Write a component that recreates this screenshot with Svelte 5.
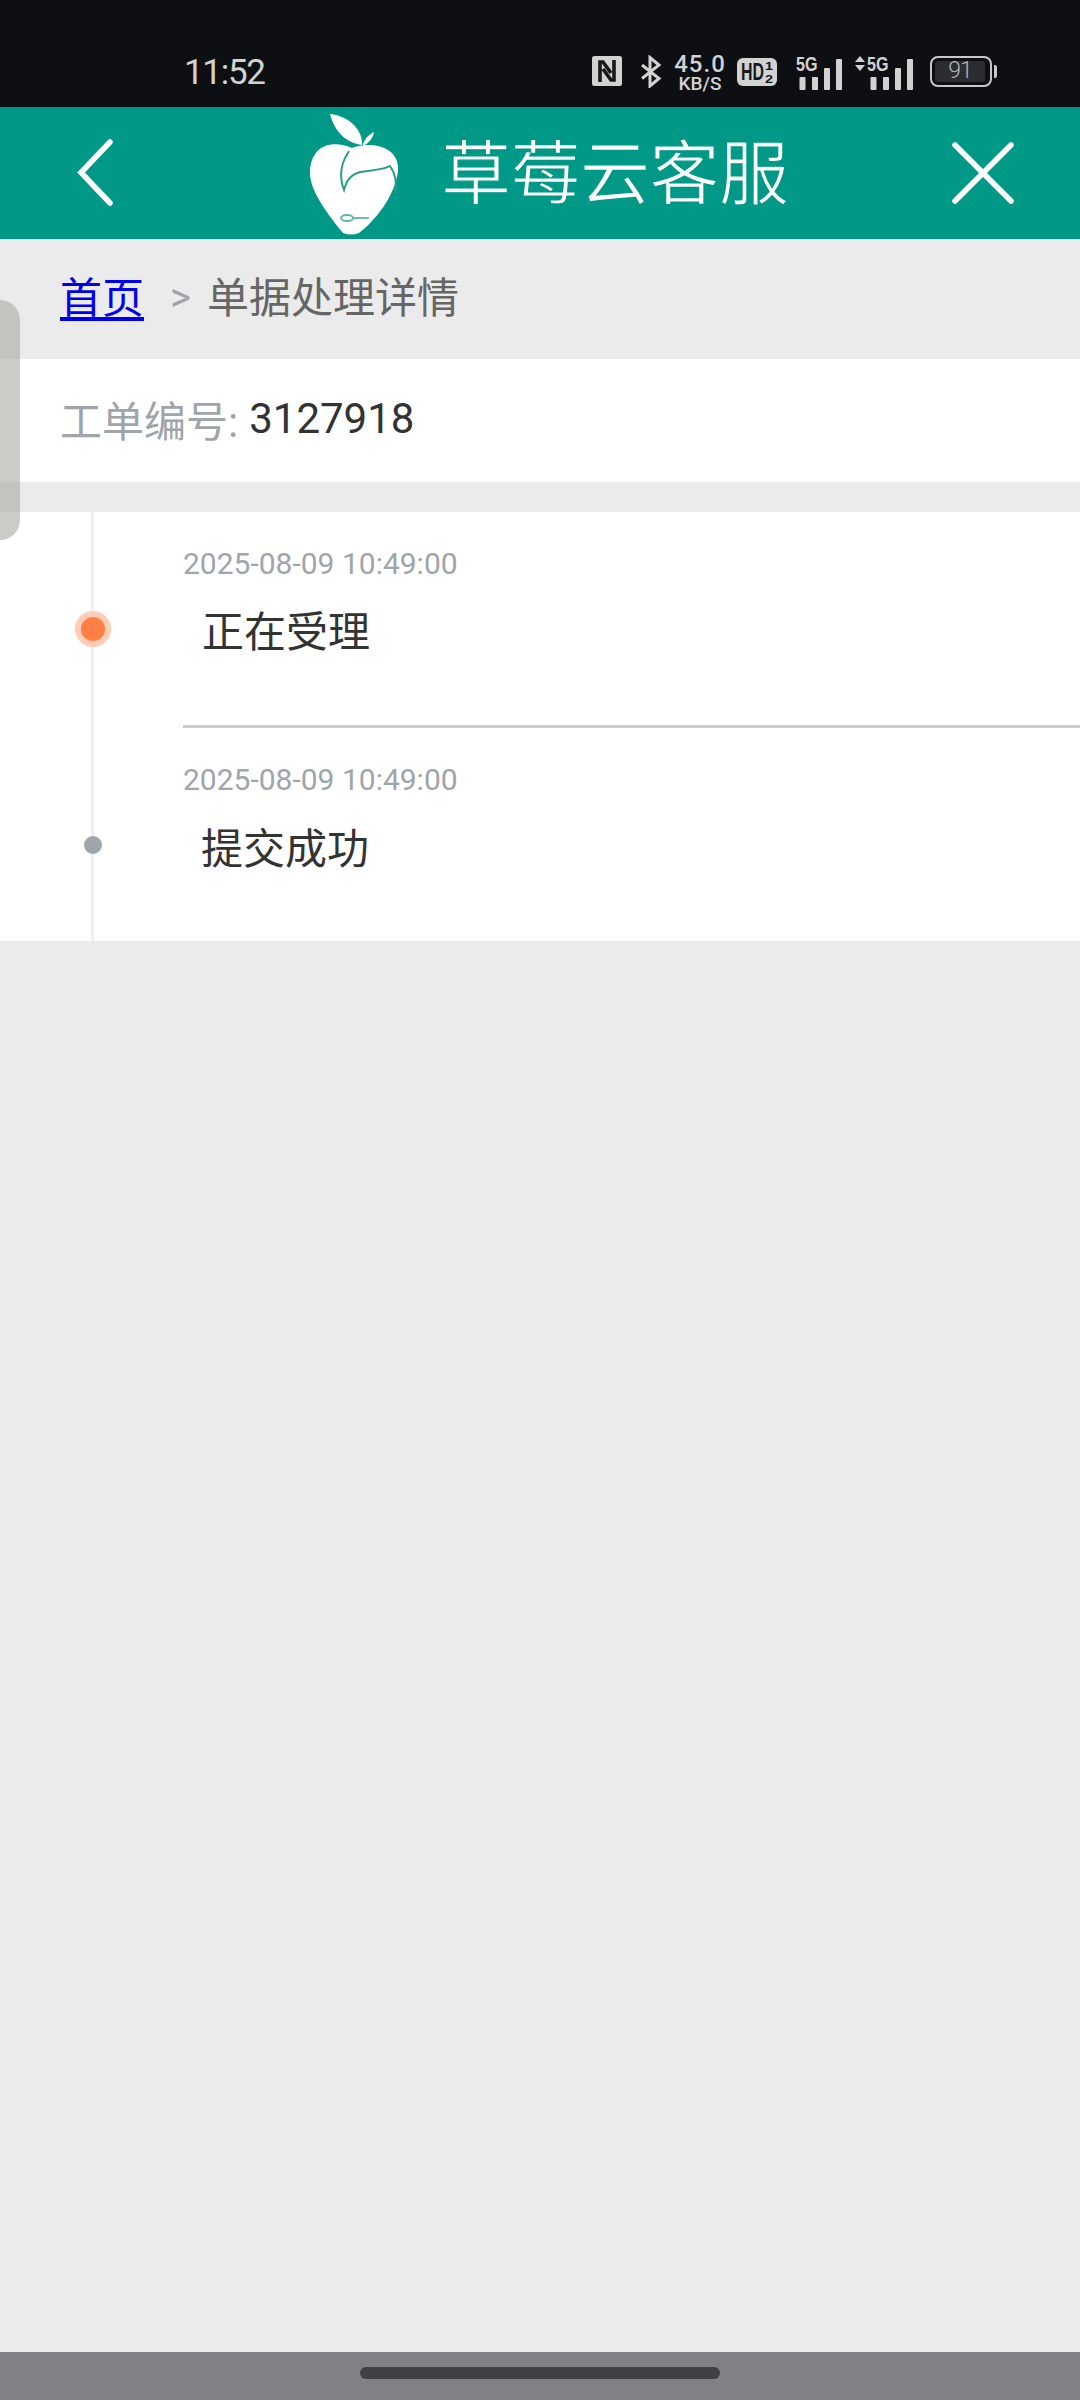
<script>
  const items = [
    { time: '2025-08-09 10:49:00', title: '正在受理', active: true },
    { time: '2025-08-09 10:49:00', title: '提交成功', active: false }
  ];
</script>

{#snippet signal(arrows)}
  <div class="signal" class:wide={arrows}>
    <svg class="sig" viewBox={arrows ? '0 0 59 40' : '0 0 46 40'} width={arrows ? 59 : 46} height="40">
      {#if arrows}
        <path d="M0 12 L5 6 L10 12Z M0 15 L5 21 L10 15Z" fill="#d2d2d2" />
      {/if}
      <g transform={arrows ? 'translate(12 0)' : 'translate(0 0)'}>
        <text x="0" y="21" class="g5" textLength="21.500" lengthAdjust="spacingAndGlyphs">5G</text>
        <rect x="3.500" y="27" width="6" height="13" rx="1" />
        <rect x="16" y="27" width="6" height="13" rx="1" />
        <rect x="28" y="18" width="6" height="22" rx="1" />
        <rect x="40" y="9" width="6" height="31" rx="1" />
      </g>
    </svg>
  </div>
{/snippet}

<div class="page">
  <div class="status">
    <span class="clock">11:52</span>
    <div class="icons">
      <svg class="nfc" viewBox="0 0 30 30" width="30" height="30">
        <rect width="30" height="30" rx="2.500" fill="#d2d2d2" />
        <path d="M8 26V6h3l8 11M22 4v20h-3l-8-11" fill="none" stroke="#17181b" stroke-width="3.600" />
      </svg>
      <svg class="bt" viewBox="0 0 22 33" width="22" height="33">
        <path d="M2 10 L19 23.500 L10 31 V2.500 L19 10 L2 23.500" fill="none" stroke="#d2d2d2" stroke-width="3" />
      </svg>
      <div class="speed"><span class="num">45.0</span><span class="unit">KB/S</span></div>
      <svg class="hd" viewBox="0 0 40 28" width="40" height="28">
        <rect width="40" height="28" rx="6" fill="#d2d2d2" />
        <text x="4" y="22" class="hdt" textLength="23" lengthAdjust="spacingAndGlyphs">HD</text>
        <text x="28" y="12" class="hds" textLength="8" lengthAdjust="spacingAndGlyphs">1</text>
        <text x="28" y="25" class="hds" textLength="8" lengthAdjust="spacingAndGlyphs">2</text>
      </svg>
      {@render signal(false)}
      {@render signal(true)}
      <div class="battery">
        <div class="shell"><span class="level">91</span></div>
        <span class="tip"></span>
      </div>
    </div>
  </div>

  <header class="bar">
    <svg class="back" viewBox="0 0 38 68" width="38" height="68">
      <path d="M33 3 L4 33.500 L33 64" fill="none" stroke="#fff" stroke-width="5.500" stroke-linecap="round" />
    </svg>
    <div class="logo">
      <svg class="apple" viewBox="0 0 100 125" width="100" height="125">
        <path d="M25 3 C45 5 58 20 57 34 C42 32 30 22 25 3Z" fill="#fff" />
        <path d="M58 33 C60 27 65 23 69 21 C68 27 64 32 58 35Z" fill="#fff" />
        <path d="M47 37 C32 30 7 30 5 60 C4 78 20 100 38 122 Q46 125 54 122 C70 110 90 85 93 60 C95 35 65 30 47 37Z" fill="#fff" />
        <path d="M44 40 C36 52 34 66 39 79 C42 68 46 64 55 61 C68 59 78 59 85 55 C90 62 92 72 90 82" fill="none" stroke="#2b9c8c" stroke-width="2" />
        <ellipse cx="42" cy="107" rx="6" ry="3" fill="none" stroke="#5db5a8" stroke-width="1.800" />
        <path d="M48 107 H64" stroke="#5db5a8" stroke-width="1.800" />
      </svg>
      <span class="brand">草莓云客服</span>
    </div>
    <svg class="close" viewBox="0 0 62 62" width="62" height="62">
      <path d="M3 3 L59 59 M59 3 L3 59" fill="none" stroke="#fff" stroke-width="5.500" stroke-linecap="round" />
    </svg>
  </header>

  <main class="content">
    <nav class="crumbs">
      <a href="#top">首页</a>
      <span class="sep">&gt;</span>
      <span class="current">单据处理详情</span>
    </nav>

    <div class="order"><span class="label">工单编号:</span> <span class="value">3127918</span></div>

    <section class="timeline">
      {#each items as item}
        <article class="item">
          <span class="dot" class:active={item.active}></span>
          <div class="body">
            <time>{item.time}</time>
            <p>{item.title}</p>
          </div>
        </article>
      {/each}
    </section>

    <div class="handle"></div>
  </main>

  <div class="nav"><span class="pill"></span></div>
</div>

<style>
  :global(body) { margin: 0; }
  .page {
    width: 1080px; height: 2400px; display: flex; flex-direction: column;
    font-family: Roboto, "Noto Sans CJK SC", sans-serif; background: #ebebeb; overflow: hidden;
  }
  .status {
    height: 107px; flex: none; background: #0e0f13; display: flex; align-items: flex-start;
    padding-left: 184px; box-sizing: border-box; color: #d2d2d2;
  }
  .clock { font-size: 35px; line-height: 40px; margin-top: 53px; letter-spacing: -1.300px; }
  .icons { margin-left: auto; margin-right: 83px; margin-top: 50px; display: flex; align-items: flex-start; }
  .nfc { margin-top: 6px; display: block; }
  .bt { margin-top: 5px; margin-left: 18px; display: block; }
  .speed { margin-left: 13px; margin-top: 4px; width: 50px; display: flex; flex-direction: column; align-items: center; font-weight: 500; }
  .num { font-size: 24px; line-height: 20px; letter-spacing: 1px; }
  .unit { font-size: 19px; line-height: 17px; margin-top: 1px; }
  .hd { margin-left: 12px; margin-top: 8px; display: block; }
  .hdt { font: 700 23px "Liberation Sans", sans-serif; fill: #17181b; }
  .hds { font: 700 11px "Liberation Sans", sans-serif; fill: #17181b; }
  .signal { margin-left: 19px; display: block; }
  .signal.wide { margin-left: 13px; }
  .sig { display: block; }
  .sig rect { fill: #d2d2d2; }
  .g5 { font: 700 21px "Liberation Sans", sans-serif; fill: #d2d2d2; }
  .battery { margin-left: 16px; margin-top: 6px; display: flex; align-items: center; }
  .shell {
    width: 62px; height: 31px; box-sizing: border-box; border: 2.500px solid #c8c8c8; border-radius: 8px;
    padding: 3px 5px 3px 3px; display: flex;
  }
  .level {
    flex: 1; background: #2c2d31; border-radius: 3px; text-align: center; color: #b5b5b5;
    font-size: 23px; line-height: 20px; font-weight: 300; letter-spacing: -1px;
  }
  .tip { width: 3px; height: 13px; background: #c8c8c8; margin-left: 2px; border-radius: 0 2px 2px 0; }

  .bar {
    height: 132px; flex: none; background: #009887; display: flex; align-items: center;
    padding-left: 77px; padding-right: 66px; box-sizing: border-box;
  }
  .back, .close { display: block; flex: none; }
  .logo { margin-left: 190px; display: flex; align-items: center; width: 486px; height: 132px; filter: blur(.4px); }
  .apple { display: block; margin-top: 1px; flex: none; }
  .brand {
    margin-left: 36px; font-size: 70px; line-height: 80px; color: #fff; white-space: nowrap;
    letter-spacing: -.500px; -webkit-text-stroke: 1.200px #009887; margin-top: 4px;
  }
  .close { margin-left: auto; }

  .content { flex: 1; position: relative; min-height: 0; font-size: 42px; }
  .crumbs { height: 120px; display: flex; align-items: center; padding-left: 60px; box-sizing: border-box; padding-bottom: 10px; }
  .crumbs a { color: #0000ee; text-decoration: underline; text-underline-offset: 4px; }
  .sep { font-size: 40px; color: #9ea5ab; margin: 6px 16px 0 26px; }
  .current { color: #666; }
  .order {
    height: 123px; background: #fff; display: flex; align-items: center; padding-left: 60px;
    box-sizing: border-box; margin-bottom: 30px; white-space: pre; padding-bottom: 5px;
  }
  .label { color: #9ea5ab; }
  .value { color: #333; margin-left: 11px; }
  .timeline { background: #fff; position: relative; height: 429px; }
  .timeline::before {
    content: ""; position: absolute; left: 91px; top: 0; bottom: 0; width: 3px; background: #eee;
  }
  .item { position: relative; padding-left: 183px; height: 216px; box-sizing: border-box; }
  .item + .item { height: 213px; }
  .body { padding-top: 35px; height: 216px; box-sizing: border-box; border-bottom: 3px solid #c8cdd1; }
  .item + .item .body { border-bottom: 0; height: 213px; }
  .item + .item p { margin-top: 29px; margin-left: 18px; }
  time { display: block; font-size: 30px; line-height: 34px; color: #9ea5ab; }
  p { margin: 28px 0 0 19px; font-size: 42px; line-height: 48px; color: #333; }
  .dot {
    position: absolute; left: 84px; top: 108px; width: 18px; height: 18px; border-radius: 50%; background: #9ea5ab;
  }
  .dot.active {
    left: 81px; top: 105px; width: 24px; height: 24px; background: #ff7f45;
    box-shadow: 0 0 0 6px #ffcdb5;
  }
  .handle {
    position: absolute; left: -30px; top: 61px; width: 50px; height: 240px; border-radius: 20px;
    background: rgba(170, 174, 165, .62);
  }
  .nav { height: 48px; flex: none; background: #808185; display: flex; justify-content: center; padding-top: 15px; box-sizing: border-box; }
  .pill { width: 360px; height: 12px; border-radius: 6px; background: #404144; }
</style>
